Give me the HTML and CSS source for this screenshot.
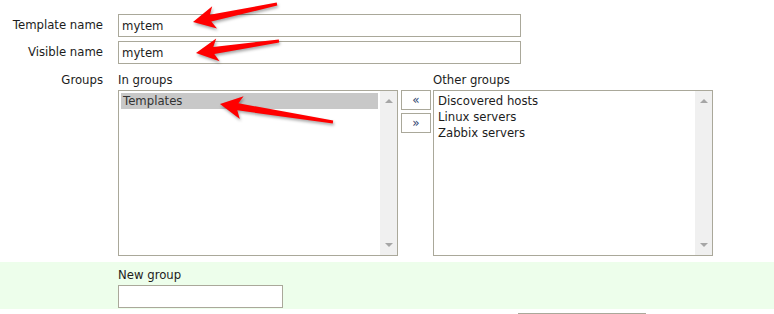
FILE: index.html
```html
<!DOCTYPE html>
<html lang="en">

<head>
    <meta charset="UTF-8">
    <title>Template</title>
    <link rel="stylesheet" href="styles.css">
</head>

<body>

    <div class="form">
        <div class="row">
            <label class="label">Template name</label>
            <input class="text-input wide" type="text" value="mytem">
        </div>
        <div class="row">
            <label class="label">Visible name</label>
            <input class="text-input wide" type="text" value="mytem">
        </div>
        <div class="row groups-row">
            <div class="label small">Groups</div>
            <div class="tween">
                <div class="tween-col">
                    <div class="col-title">In groups</div>
                    <div class="listbox">
                        <ul class="options">
                            <li class="selected">Templates</li>
                        </ul>
                        <div class="scrollbar"><span class="up"></span><span class="down"></span></div>
                    </div>
                </div>
                <div class="move-buttons">
                    <button class="move">&laquo;</button>
                    <button class="move">&raquo;</button>
                </div>
                <div class="tween-col">
                    <div class="col-title">Other groups</div>
                    <div class="listbox">
                        <ul class="options">
                            <li>Discovered hosts</li>
                            <li>Linux servers</li>
                            <li>Zabbix servers</li>
                        </ul>
                        <div class="scrollbar"><span class="up"></span><span class="down"></span></div>
                    </div>
                </div>
            </div>
        </div>
    </div>

    <div class="new-group">
        <div class="col-title">New group</div>
        <input class="text-input short" type="text">
    </div>

    <div class="next-row">
        <div class="next-field"></div>
    </div>

    <!-- annotation arrows -->
    <svg class="arrows" width="774" height="314" viewBox="0 0 774 314">
        <polygon points="193,22 217,28.5 211.3,21.6 277.3,5.5 276.7,2.5 209.9,14.8 212.2,6.3" />
        <polygon points="196,53 219.6,61.2 214.3,53.9 279.2,42.5 278.8,39.5 213.3,46.9 216.2,38.6" />
        <polygon points="220,104 239.8,119 237.3,110.3 332.8,123.5 333.2,120.5 238.4,103.3 243.6,96.2" />
    </svg>

</body>

</html>
```

FILE: styles.css
```css
body {
    margin: 0;
    padding: 0;
    background-color: #fff;
    color: #1c1c1c;
    font-family: 'DejaVu Sans', 'Liberation Sans', sans-serif;
    font-size: 11.7px;
    position: relative;
    height: 314px;
    overflow: hidden;
}

.form {
    padding-top: 14px;
}

.row {
    display: flex;
    align-items: flex-start;
    margin-bottom: 4px;
}

.label {
    width: 103px;
    padding-right: 15px;
    text-align: right;
    line-height: 23px;
    flex-shrink: 0;
}

.label.small {
    line-height: 16px;
}

.groups-row {
    margin-top: 8px;
    margin-bottom: 0;
}

.text-input {
    box-sizing: border-box;
    height: 23px;
    border: 1px solid #aaa89a;
    padding: 1px 3px 0;
    font-family: inherit;
    font-size: 11.7px;
    color: #1c1c1c;
    background: #fff;
    outline: none;
    margin: 0;
}

.text-input.wide {
    width: 403px;
}

.text-input.short {
    width: 165px;
}

.tween {
    display: flex;
    align-items: flex-start;
}

.col-title {
    line-height: 16px;
    margin-bottom: 2px;
}

.listbox {
    box-sizing: border-box;
    width: 280px;
    height: 166px;
    border: 1px solid #aaa89a;
    display: flex;
    background: #fff;
}

.options {
    list-style: none;
    margin: 0;
    padding: 2px;
    flex: 1;
}

.options li {
    line-height: 16px;
    padding-left: 2px;
}

.options li.selected {
    background-color: #c8c8c8;
    color: #333;
}

.scrollbar {
    width: 17px;
    background-color: #f0f0f0;
    display: flex;
    flex-direction: column;
    justify-content: space-between;
    align-items: center;
    padding: 8px 0;
    box-sizing: border-box;
}

.scrollbar .up {
    width: 0;
    height: 0;
    border-left: 4px solid transparent;
    border-right: 4px solid transparent;
    border-bottom: 4px solid #a6a6a6;
}

.scrollbar .down {
    width: 0;
    height: 0;
    border-left: 4px solid transparent;
    border-right: 4px solid transparent;
    border-top: 4px solid #a6a6a6;
}

.move-buttons {
    display: flex;
    flex-direction: column;
    gap: 3px;
    margin: 18px 2px 0 3px;
}

.move {
    box-sizing: border-box;
    width: 30px;
    height: 20px;
    border: 1px solid #aaa89a;
    background: #fff;
    color: #2c4470;
    font-family: inherit;
    font-size: 12px;
    padding: 0;
    line-height: 16px;
}

.new-group {
    margin-top: 6px;
    background-color: #edfeeb;
    padding: 5px 0 1px 118px;
}

.next-row {
    padding: 4px 0 0 518px;
}

.next-field {
    width: 128px;
    height: 1px;
    background-color: #aaa89a;
}

.arrows {
    position: absolute;
    left: 0;
    top: 0;
    pointer-events: none;
    filter: drop-shadow(1px 2px 1.5px rgba(0, 0, 0, 0.35));
}

.arrows polygon {
    fill: #ff0000;
}
```
